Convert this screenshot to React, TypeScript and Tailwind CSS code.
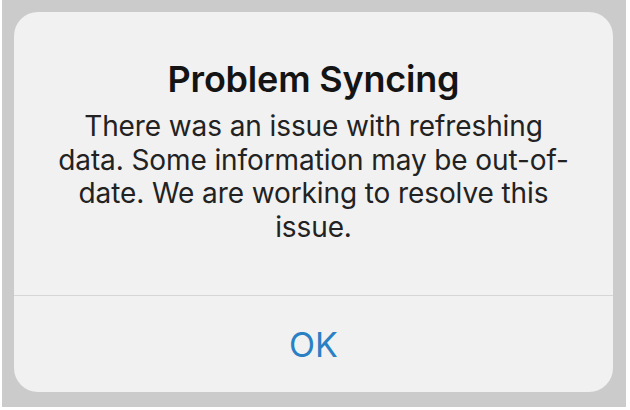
import React from 'react';

const App: React.FC = () => {
  return (
    <div className="w-[630px] h-[410px] bg-white" style={{ fontFamily: 'Inter, "Liberation Sans", sans-serif' }}>
      {/* backdrop */}
      <div className="ml-[2px] w-[624px] h-[407px] bg-[#cbcbcb] pt-[12px] pl-[12px]">
        {/* alert card */}
        <div className="w-[599px] h-[380px] bg-[#f1f1f1] rounded-[24px] flex flex-col">
          <div className="h-[284px] border-b border-[#d6d6d6] pt-[44px] flex flex-col items-center text-center">
            <h1 className="text-[36px] leading-[46px] font-semibold text-[#141414] tracking-[-0.2px]">
              Problem Syncing
            </h1>
            <p className="mt-[8px] text-[28px] leading-[33.5px] text-[#222222] tracking-[-0.1px]">
              There was an issue with refreshing
              <br />
              data. Some information may be out-of-
              <br />
              date. We are working to resolve this
              <br />
              issue.
            </p>
          </div>
          <button className="flex-1 flex items-center justify-center text-[34px] text-[#2a80c4]">
            OK
          </button>
        </div>
      </div>
    </div>
  );
};

export default App;
